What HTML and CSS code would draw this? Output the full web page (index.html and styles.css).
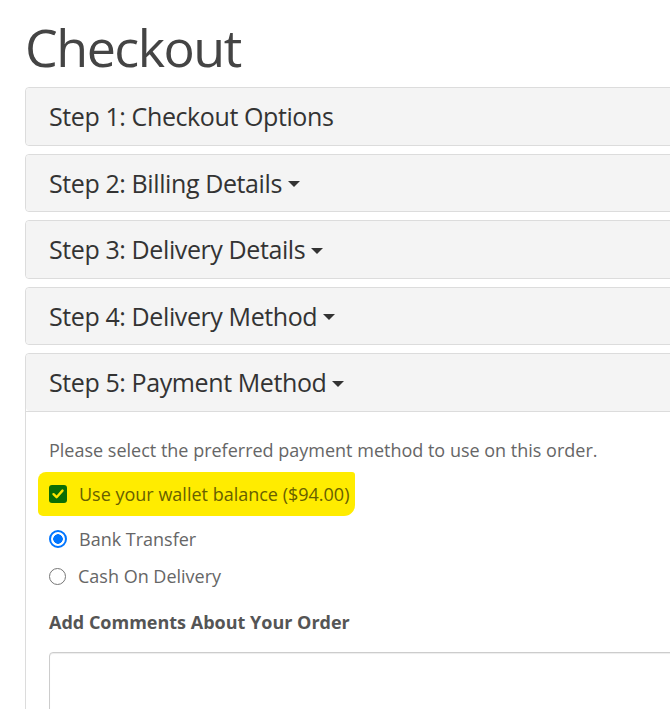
FILE: index.html
```html
<!DOCTYPE html>
<html lang="en">
<head>
<meta charset="utf-8">
<title>Checkout</title>
<link rel="stylesheet" href="styles.css">
</head>
<body>
<main class="page">
  <h1 class="title">Checkout</h1>
  <section class="panel">
    <div class="panel-heading">Step 1: Checkout Options</div>
  </section>
  <section class="panel">
    <div class="panel-heading">Step 2: Billing Details <span class="caret"></span></div>
  </section>
  <section class="panel">
    <div class="panel-heading">Step 3: Delivery Details <span class="caret"></span></div>
  </section>
  <section class="panel">
    <div class="panel-heading">Step 4: Delivery Method <span class="caret"></span></div>
  </section>
  <section class="panel">
    <div class="panel-heading">Step 5: Payment Method <span class="caret"></span></div>
    <div class="panel-body">
      <p class="intro">Please select the preferred payment method to use on this order.</p>
      <div class="wallet-row">
        <label class="wallet">
          <span class="check-box">
            <svg viewBox="0 0 14 14" width="14" height="14"><path d="M2.5 7.2 L5.6 10.2 L11.5 3.6" fill="none" stroke="#ffe600" stroke-width="2.4" stroke-linecap="round" stroke-linejoin="round"/></svg>
          </span>
          <span class="wallet-text">Use your wallet balance ($94.00)</span>
        </label>
      </div>
      <label class="option"><span class="radio checked"></span><span>Bank Transfer</span></label>
      <label class="option"><span class="radio"></span><span>Cash On Delivery</span></label>
      <p class="comments-label">Add Comments About Your Order</p>
      <div class="comments"></div>
    </div>
  </section>
</main>
</body>
</html>
```
FILE: styles.css
```css
html, body {
  margin: 0;
  padding: 0;
  overflow: hidden;
  background: #fff;
}
body {
  font-family: "Open Sans", "Noto Sans", sans-serif;
  color: #333;
}
.page {
  width: 720px;
  padding: 0 0 0 25px;
}
.title {
  margin: 17px 0 10px;
  font-size: 52px;
  font-weight: 400;
  line-height: 60px;
  color: #444;
  letter-spacing: -1.5px;
}
.panel {
  border: 1px solid #dcdcdc;
  border-radius: 4px;
  margin-bottom: 8px;
  background: #fff;
}
.panel-heading {
  height: 56.5px;
  display: flex;
  align-items: center;
  gap: 6px;
  padding: 0 23px;
  background: #f4f4f4;
  border-radius: 4px;
  font-size: 25px;
  color: #333;
  letter-spacing: -0.4px;
}
.panel-body {
  border-top: 1px solid #dcdcdc;
  padding: 26px 23px 0;
}
.caret {
  width: 0;
  height: 0;
  border-left: 6px solid transparent;
  border-right: 6px solid transparent;
  border-top: 6px solid #333;
  margin-top: 3px;
}
.intro {
  margin: 0 0 10px;
  font-size: 18px;
  line-height: 24px;
  color: #666;
}
.wallet-row {
  margin: 0 0 5px -11px;
}
.wallet {
  display: inline-flex;
  align-items: center;
  gap: 12px;
  height: 44px;
  box-sizing: border-box;
  padding: 0 6px 0 11px;
  background: #ffec00;
  border-radius: 8px 3px 11px 5px;
}
.check-box {
  width: 18px;
  height: 18px;
  border-radius: 3px;
  background: #0b6d05;
  display: flex;
  align-items: center;
  justify-content: center;
}
.wallet-text {
  font-size: 18px;
  color: #685f00;
}
.option {
  display: flex;
  align-items: center;
  gap: 12px;
  height: 37px;
  font-size: 18px;
  color: #666;
}
.radio {
  width: 15px;
  height: 15px;
  border: 1.5px solid #767676;
  border-radius: 50%;
  box-sizing: content-box;
}
.radio.checked {
  border: 2px solid #0075ff;
  width: 14px;
  height: 14px;
  background: radial-gradient(circle, #0075ff 0 4.5px, #fff 5px);
}
.comments-label {
  margin: 15px 0 18px;
  font-size: 18px;
  font-weight: 700;
  color: #555;
  line-height: 24px;
}
.comments {
  height: 80px;
  border: 1px solid #ccc;
  border-radius: 4px;
  box-shadow: inset 0 1px 1px rgba(0,0,0,0.075);
}
```
